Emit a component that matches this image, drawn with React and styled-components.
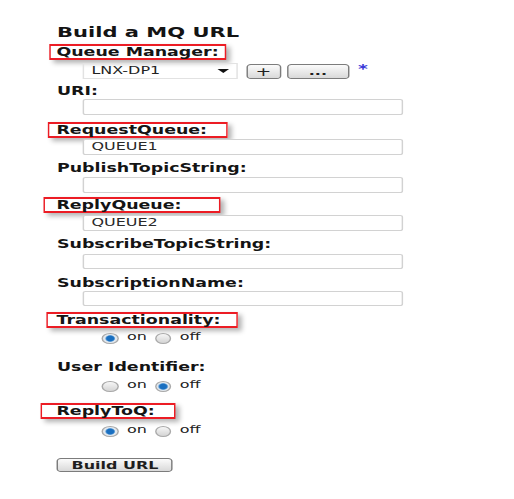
import React from "react"
import styled, { createGlobalStyle } from "styled-components"

// the whole form is shown stretched sideways, so horizontal sizes are given
// in picture pixels and divided by the stretch factor
const SX = 1.45
const h = (n) => `${(n / SX).toFixed(2)}px`

const Global = createGlobalStyle`
  body {
    margin: 0;
    background: #fff;
    overflow: hidden;
    font-family: "DejaVu Sans", Verdana, sans-serif;
  }
`

const Page = styled.div`
  width: ${h(500)};
  padding: 23px 0 20px ${h(57)};
  box-sizing: border-box;
  transform: scaleX(${SX});
  transform-origin: 0 0;
`

const Title = styled.div`
  font-size: 14.5px;
  font-weight: bold;
  color: #141414;
  line-height: 18px;
  height: 18px;
`

const Field = styled.div`
  margin-top: ${(p) => p.$gap}px;
`

const Label = styled.div`
  box-sizing: border-box;
  width: fit-content;
  font-size: 12px;
  font-weight: bold;
  color: #141414;
  line-height: 16px;
  height: 16px;
  ${(p) =>
    p.$box &&
    `
    width: ${h(p.$w)};
    margin-left: ${h(-p.$off)};
    padding-left: ${h(p.$off - 2)};
    line-height: 12px;
    border: 2px solid #ec1c24;
    border-left-width: ${h(2)};
    border-right-width: ${h(2)};
    box-shadow: ${h(4)} 3px 4px rgba(0, 0, 0, 0.3);
  `}
`

const Indent = styled.div`
  margin-left: ${h(25)};
  margin-top: ${(p) => p.$top || 0}px;
  display: flex;
  align-items: center;
`

const TextBox = styled.div`
  box-sizing: border-box;
  width: ${h(321)};
  height: ${(p) => p.$h || 16}px;
  border: 1px solid #d2d2d2;
  border-left-width: ${h(1.5)};
  border-right-width: ${h(1.5)};
  border-radius: 2px;
  font-size: 11px;
  line-height: ${(p) => (p.$h || 16) - 2}px;
  padding-left: ${h(8)};
  color: #2a2a2a;
  background: #fff;
`

const Select = styled.div`
  box-sizing: border-box;
  width: ${h(156)};
  height: 16px;
  border: 1px solid #e2e2e2;
  font-size: 11px;
  line-height: 14px;
  padding: 0 ${h(7)} 0 ${h(8)};
  color: #222;
  display: flex;
  align-items: center;
  justify-content: space-between;
`

const Caret = styled.span`
  width: 0;
  height: 0;
  border-left: ${h(6)} solid transparent;
  border-right: ${h(6)} solid transparent;
  border-top: 4px solid #111;
`

const Button = styled.div`
  box-sizing: border-box;
  width: ${(p) => h(p.$w)};
  height: ${(p) => p.$h}px;
  margin-left: ${(p) => h(p.$ml || 0)};
  border: 1px solid #7c7c7c;
  border-left-width: ${h(1.5)};
  border-right-width: ${h(1.5)};
  border-radius: 3px;
  background: linear-gradient(#fbfbfb, #d9d9d9);
  font-size: ${(p) => p.$fs}px;
  font-weight: ${(p) => p.$weight || "bold"};
  color: #1e1e1e;
  display: flex;
  align-items: center;
  justify-content: center;
  line-height: 1;
`

const Star = styled.span`
  color: #3a3ad8;
  font-size: 13px;
  font-weight: bold;
  margin-left: ${h(9)};
  margin-top: -5px;
`

const RadioRow = styled.div`
  margin-left: ${h(45)};
  margin-top: ${(p) => p.$top}px;
  display: flex;
  align-items: center;
  height: 12px;
  font-size: 11px;
  color: #222;
`

const Radio = styled.span`
  box-sizing: border-box;
  width: ${h(17)};
  height: 11px;
  border-radius: 50%;
  border: 1px solid #a9a9a9;
  background: ${(p) =>
    p.$on
      ? "radial-gradient(circle, #1a6fc0 0 2.4px, #5a9bd6 3px, #e2e8ee 3.6px)"
      : "linear-gradient(#f6f6f6, #d4d4d4)"};
`

const RadioText = styled.span`
  margin: -4px ${h(8)} 0 ${h(8)};
`

const Choice = ({ on, top }) => (
  <RadioRow $top={top}>
    <Radio $on={on} />
    <RadioText>on</RadioText>
    <Radio $on={!on} />
    <RadioText>off</RadioText>
  </RadioRow>
)

const Text = ({ label, value, gap, top = 0, box, boxH }) => (
  <Field $gap={gap}>
    {box ? (
      <Label $box $off={box[0]} $w={box[1]}>
        {label}
      </Label>
    ) : (
      <Label>{label}</Label>
    )}
    <Indent $top={top}>
      <TextBox $h={boxH}>{value}</TextBox>
    </Indent>
  </Field>
)

export default function App() {
  return (
    <Page>
      <Global />
      <Title>Build a MQ URL</Title>
      <Field $gap={3}>
        <Label $box $off={8} $w={177}>
          Queue Manager:
        </Label>
        <Indent $top={3}>
          <Select>
            LNX-DP1
            <Caret />
          </Select>
          <Button $w={35} $h={15} $fs={13} $ml={8} $weight="normal">
            +
          </Button>
          <Button $w={62} $h={15} $fs={11} $ml={6}>
            ...
          </Button>
          <Star>*</Star>
        </Indent>
      </Field>
      <Text label="URI:" gap={4} />
      <Text label="RequestQueue:" value="QUEUE1" gap={7} top={1} box={[9, 179]} />
      <Text label="PublishTopicString:" gap={5} top={1} />
      <Text label="ReplyQueue:" value="QUEUE2" gap={4} top={2} box={[13, 176]} />
      <Text label="SubscribeTopicString:" gap={5} top={2} boxH={15} />
      <Text label="SubscriptionName:" gap={6} boxH={15} />
      <Field $gap={6}>
        <Label $box $off={10} $w={191}>
          Transactionality:
        </Label>
        <Choice on top={4} />
      </Field>
      <Field $gap={15}>
        <Label>User Identifier:</Label>
        <Choice on={false} top={5} />
      </Field>
      <Field $gap={11}>
        <Label $box $off={16} $w={135}>
          ReplyToQ:
        </Label>
        <Choice on top={6} />
      </Field>
      <Field $gap={21}>
        <Button $w={116} $h={14} $fs={11}>
          Build URL
        </Button>
      </Field>
    </Page>
  )
}
